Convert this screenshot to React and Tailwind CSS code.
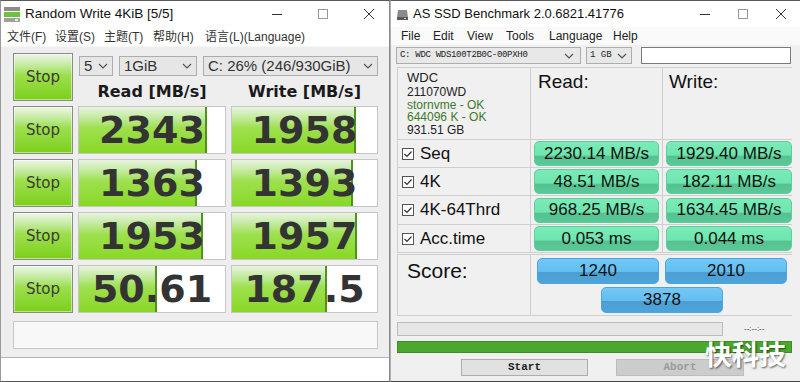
import React from 'react';

const sans = "font-['Liberation_Sans',Arial,sans-serif]";
const cjk = "font-['Liberation_Sans','Noto_Sans_CJK_SC',sans-serif]";

const results = [
  { read: '2343', readFill: 128, write: '1958', writeFill: 124 },
  { read: '1363', readFill: 118, write: '1393', writeFill: 121 },
  { read: '1953', readFill: 124, write: '1957', writeFill: 125 },
  { read: '50.61', readFill: 78, write: '187.5', writeFill: 95 },
];

const ssdRows = [
  { name: 'Seq', read: '2230.14 MB/s', write: '1929.40 MB/s', h: 'h-[27px]' },
  { name: '4K', read: '48.51 MB/s', write: '182.11 MB/s', h: 'h-[27px]' },
  { name: '4K-64Thrd', read: '968.25 MB/s', write: '1634.45 MB/s', h: 'h-[28px]' },
  { name: 'Acc.time', read: '0.053 ms', write: '0.044 ms', h: 'h-[27px]' },
];

const WinControls = ({ gap }) => (
  <div className={`flex items-center ${gap}`}>
    <svg width="12" height="12" viewBox="0 0 12 12"><path d="M1 6.5h10" stroke="#333" strokeWidth="1" /></svg>
    <svg width="12" height="12" viewBox="0 0 12 12"><rect x="1.5" y="1.5" width="9" height="9" fill="none" stroke="#999" strokeWidth="1" /></svg>
    <svg width="12" height="12" viewBox="0 0 12 12"><path d="M1 1l10 10M11 1L1 11" stroke="#333" strokeWidth="1" /></svg>
  </div>
);

const Chevron = () => (
  <svg width="10" height="6" viewBox="0 0 10 6"><path d="M1 1l4 4 4-4" fill="none" stroke="#555" strokeWidth="1.2" /></svg>
);

const StopButton = () => (
  <div className={`h-[48px] flex items-center justify-center border border-[#8a8a8a] bg-linear-to-b from-[#eef6e8] via-[#9ddf4c] via-45% to-[#7ccf14] text-[15px] text-[#3a3a3a] font-['DejaVu_Sans',sans-serif] shadow-[inset_0_0_0_1px_rgba(255,255,255,0.5)]`}>
    Stop
  </div>
);

const ResultBox = ({ value, fill }) => (
  <div className="relative h-[48px] border border-[#c6c6c6] bg-white overflow-hidden">
    <div
      className="absolute inset-y-0 left-0 border-r-2 border-[#4f9220] bg-linear-to-b from-[#e8f3e0] via-[#9fe04e] via-45% to-[#88d822]"
      style={{ width: fill }}
    />
    <div className="relative flex h-full items-center justify-center font-['DejaVu_Sans',Verdana,sans-serif] text-[38px] font-bold leading-none text-[#333]">
      {value}
    </div>
  </div>
);

const MintPill = ({ children }) => (
  <div className={`mx-[3px] h-[25px] flex items-center justify-center rounded-[5px] border border-[#5ccf9c] bg-[linear-gradient(#7aebb8_0%,#6fe5ae_58%,#55c191_60%,#5bc897_100%)] text-[17px] text-[#111] ${sans}`}>
    {children}
  </div>
);

const BluePill = ({ children }) => (
  <div className={`w-[122px] h-[26px] flex items-center justify-center rounded-[5px] border border-[#4aa6e2] bg-[linear-gradient(#72c8f6_0%,#64bef1_52%,#4b9fd4_54%,#4ea3d8_100%)] text-[17px] text-[#111] ${sans}`}>
    {children}
  </div>
);

const CheckBox = () => (
  <svg width="12" height="12" viewBox="0 0 12 12" className="shrink-0">
    <rect x="0.5" y="0.5" width="11" height="11" fill="#fff" stroke="#555" />
    <path d="M2.5 6l2.5 2.5 4.5-5" fill="none" stroke="#333" strokeWidth="1.2" />
  </svg>
);

const LeftWindow = () => (
  <div className="w-[390px] h-[382px] flex flex-col bg-white border-t border-l border-r border-b border-t-[#5a5a5a] border-l-[#9a9a9a] border-r-[#8a8a8a] border-b-[#555]">
    <div className="h-[26px] flex items-center pl-[2px] pr-[14px]">
      <svg width="18" height="17" viewBox="0 0 18 17" className="mr-[4px]">
        <rect x="1" y="1" width="16" height="4" fill="#8c8c8c" />
        <rect x="1" y="6" width="16" height="5" fill="#6cc23a" />
        <rect x="1" y="12" width="16" height="4" fill="#a0a0a0" />
        <rect x="12" y="13" width="3" height="2" fill="#e8e8e8" />
      </svg>
      <span className={`text-[13.5px] text-[#111] ${sans}`}>Random Write 4KiB [5/5]</span>
      <div className="flex-1" />
      <WinControls gap="gap-[34px]" />
    </div>
    <div className={`h-[19px] flex items-center pl-[6px] text-[12px] text-[#333] ${cjk}`}>
      <span className="w-[48px]">文件(F)</span>
      <span className="w-[49px]">设置(S)</span>
      <span className="w-[49px]">主题(T)</span>
      <span className="w-[52px]">帮助(H)</span>
      <span>语言(L)(Language)</span>
    </div>
    <div className="h-[312px] bg-[#eeeeee] border-t border-[#f7f7f7] border-b border-b-[#b4b4b4] pl-[12px] pt-[6px]">
      <div className="grid grid-cols-[60px_148px_147px] gap-[5px]">
        <StopButton />
        <div className="col-span-2 h-[48px] flex flex-col">
          <div className={`mt-[3px] h-[20px] flex gap-[6px] pl-px text-[15px] text-[#333] ${sans}`}>
            <div className="w-[34px] flex items-center justify-between px-[4px] border border-[#adadad] bg-[#e6e6e6]">
              <span>5</span><Chevron />
            </div>
            <div className="w-[78px] flex items-center justify-between px-[4px] border border-[#adadad] bg-[#e6e6e6]">
              <span>1GiB</span><Chevron />
            </div>
            <div className="w-[175px] flex items-center justify-between px-[4px] border border-[#adadad] bg-[#e6e6e6]">
              <span>C: 26% (246/930GiB)</span><Chevron />
            </div>
          </div>
          <div className="flex-1 pt-[4px] grid grid-cols-[148px_147px] gap-[5px] items-center font-['DejaVu_Sans',Verdana,sans-serif] text-[16px] font-bold text-[#1a1a1a]">
            <div className="text-center">Read [MB/s]</div>
            <div className="text-center">Write [MB/s]</div>
          </div>
        </div>
        {results.map((r, i) => (
          <React.Fragment key={i}>
            <StopButton />
            <ResultBox value={r.read} fill={r.readFill} />
            <ResultBox value={r.write} fill={r.writeFill} />
          </React.Fragment>
        ))}
        <div className="col-span-3 mt-[3px] h-[28px] border border-[#c8c8c8] bg-[#f8f8f8]" />
      </div>
    </div>
    <div className="flex-1 bg-white" />
  </div>
);

const RightWindow = () => (
  <div className="relative flex-1 h-[382px] flex flex-col bg-[#f0f0f0] border-t border-l border-b border-t-[#5a5a5a] border-l-[#b0b0b0] border-b-[#444]">
    <div className="h-[26px] flex items-center bg-white pl-[5px] pr-[13px]">
      <svg width="13" height="13" viewBox="0 0 13 13" className="mr-[4px]">
        <path d="M2 2h9l1 8H1z" fill="#8a8a8a" />
        <rect x="1" y="9" width="11" height="3" fill="#5a5a5a" />
        <rect x="8" y="10" width="2" height="1" fill="#ccc" />
      </svg>
      <span className={`text-[13px] text-[#111] ${sans}`}>AS SSD Benchmark 2.0.6821.41776</span>
      <div className="flex-1" />
      <WinControls gap="gap-[26px]" />
    </div>
    <div className={`h-[18px] flex items-center bg-[#fafafa] pl-[10px] text-[12px] text-[#222] ${sans}`}>
      <span className="w-[32px]">File</span>
      <span className="w-[34px]">Edit</span>
      <span className="w-[39px]">View</span>
      <span className="w-[43px]">Tools</span>
      <span className="w-[64px]">Language</span>
      <span>Help</span>
    </div>
    <div className="flex flex-col pl-[5px] pt-[2px]">
      <div className="h-[17px] flex items-stretch">
        <div className="w-[185px] flex items-center justify-between pl-[3px] pr-[6px] border border-[#adadad] bg-[#e8e8e8] font-['Liberation_Mono',monospace] text-[9px] tracking-[-0.3px] text-[#222]">
          <span>C: WDC WDS100T2B0C-00PXH0</span><Chevron />
        </div>
        <div className="ml-[5px] w-[46px] flex items-center justify-between pl-[3px] pr-[4px] border border-[#adadad] bg-[#e8e8e8] font-['Liberation_Mono',monospace] text-[9px] text-[#222]">
          <span>1 GB</span><Chevron />
        </div>
        <div className="ml-[9px] w-[150px] border border-[#7a7a7a] bg-white" />
      </div>

      <div className="mt-[3px] ml-px w-[395px] grid grid-cols-[132px_131px_132px] gap-px bg-[#cfcfcf] border border-[#cfcfcf]">
        <div className={`h-[71px] bg-[#f0f0f0] pl-[9px] pt-[2px] leading-[12.5px] text-[12px] text-[#222] ${sans}`}>
          <div className="text-[13px] leading-[16px]">WDC</div>
          <div>211070WD</div>
          <div className="text-[#3d7a2c]">stornvme - OK</div>
          <div className="text-[#3d7a2c]">644096 K - OK</div>
          <div>931.51 GB</div>
        </div>
        <div className={`h-[71px] bg-[#f0f0f0] pl-[7px] text-[19px] text-[#111] ${sans}`}>Read:</div>
        <div className={`h-[71px] bg-[#f0f0f0] pl-[6px] text-[19px] text-[#111] ${sans}`}>Write:</div>
        {ssdRows.map((r) => (
          <React.Fragment key={r.name}>
            <div className={`${r.h} bg-[#f0f0f0] flex items-center gap-[6px] pl-[4px] text-[17px] text-[#111] ${sans}`}>
              <CheckBox />
              <span>{r.name}</span>
            </div>
            <div className={`${r.h} bg-[#f0f0f0] flex flex-col justify-center`}>
              <MintPill>{r.read}</MintPill>
            </div>
            <div className={`${r.h} bg-[#f0f0f0] flex flex-col justify-center`}>
              <MintPill>{r.write}</MintPill>
            </div>
          </React.Fragment>
        ))}
      </div>

      <div className="mt-px ml-px w-[395px] grid grid-cols-[132px_262px] gap-px bg-[#cfcfcf] border border-[#cfcfcf]">
        <div className={`h-[60px] bg-[#f0f0f0] pl-[9px] text-[21px] text-[#111] ${sans}`}>Score:</div>
        <div className="h-[60px] bg-[#f0f0f0] flex flex-col items-center pt-[3px] gap-[3px]">
          <div className="flex gap-[6px]">
            <BluePill>1240</BluePill>
            <BluePill>2010</BluePill>
          </div>
          <BluePill>3878</BluePill>
        </div>
      </div>

      <div className="mt-[6px] ml-px flex items-center">
        <div className="w-[326px] h-[14px] border border-[#bcbcbc] bg-[#e6e6e6]" />
        <span className={`ml-[21px] text-[8px] text-[#333] ${sans}`}>--:--:--</span>
      </div>
      <div className="mt-[5px] ml-px w-[395px] h-[12px] border border-[#3f8c27] bg-[#4ca72f]" />
      <div className={`mt-[6px] flex h-[17px] font-['Liberation_Mono',monospace] text-[11px] font-bold`}>
        <div className="ml-[65px] w-[127px] flex items-center justify-center border border-[#adadad] bg-[#e1e1e1] text-[#222]">Start</div>
        <div className="ml-[28px] w-[128px] flex items-center justify-center border border-[#bdbdbd] bg-[#cccccc] text-[#9a9a9a]">Abort</div>
      </div>
    </div>

    <div className="absolute left-[314px] top-[339px] font-['Noto_Sans_CJK_SC',sans-serif] text-[27px] font-bold leading-none text-white [text-shadow:1px_1px_2px_rgba(0,0,0,0.6)]">
      快科技
    </div>
  </div>
);

const App = () => {
  return (
    <div className="w-[800px] h-[382px] flex overflow-hidden bg-[#dcdcdc]">
      <LeftWindow />
      <RightWindow />
    </div>
  );
};

export default App;
